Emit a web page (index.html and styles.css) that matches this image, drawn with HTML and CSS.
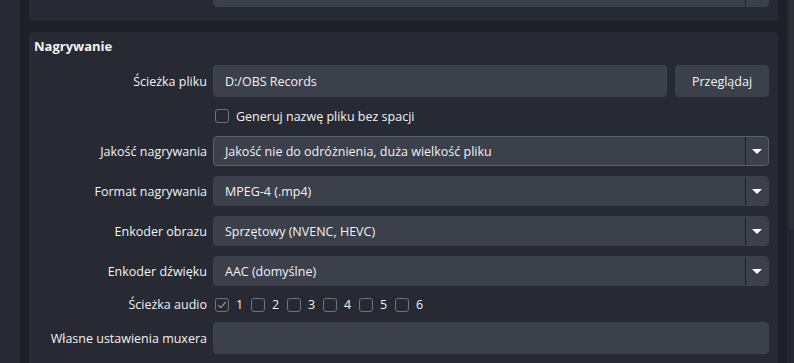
FILE: index.html
```html
<!DOCTYPE html>
<html lang="pl">

<head>
  <meta charset="UTF-8" />
  <meta name="viewport" content="width=device-width, initial-scale=1.0" />
  <title>Ustawienia - Wyjście</title>
  <link rel="stylesheet" href="styles.css">
</head>

<body>
  <div class="window">
    <div class="side"></div>
    <div class="scroll">
      <!-- panel above, scrolled mostly out of view -->
      <div class="group group-prev">
        <div class="form">
          <span class="label"></span>
          <div class="select"><span class="value"></span><span class="arrow"></span></div>
        </div>
      </div>

      <div class="group">
        <h3 class="title">Nagrywanie</h3>
        <div class="form">
          <span class="label">Ścieżka pliku</span>
          <div class="path-row">
            <div class="input">D:/OBS Records</div>
            <button class="btn">Przeglądaj</button>
          </div>

          <span class="label"></span>
          <label class="check-row"><span class="box"></span>Generuj nazwę pliku bez spacji</label>

          <span class="label">Jakość nagrywania</span>
          <div class="select-wrap">
            <div class="select focus"><span class="value">Jakość nie do odróżnienia, duża wielkość pliku</span><span class="arrow"></span></div>
          </div>

          <span class="label">Format nagrywania</span>
          <div class="select-wrap">
            <div class="select"><span class="value">MPEG-4 (.mp4)</span><span class="arrow"></span></div>
          </div>

          <span class="label">Enkoder obrazu</span>
          <div class="select-wrap">
            <div class="select"><span class="value">Sprzętowy (NVENC, HEVC)</span><span class="arrow"></span></div>
          </div>

          <span class="label">Enkoder dźwięku</span>
          <div class="select-wrap">
            <div class="select"><span class="value">AAC (domyślne)</span><span class="arrow"></span></div>
          </div>

          <span class="label">Ścieżka audio</span>
          <div class="tracks">
            <label class="track"><span class="box checked"></span>1</label>
            <label class="track"><span class="box"></span>2</label>
            <label class="track"><span class="box"></span>3</label>
            <label class="track"><span class="box"></span>4</label>
            <label class="track"><span class="box"></span>5</label>
            <label class="track"><span class="box"></span>6</label>
          </div>

          <span class="label">Własne ustawienia muxera</span>
          <div class="input"></div>
        </div>
      </div>
    </div>
    <div class="scrollbar"><div class="handle"></div></div>
  </div>
</body>

</html>
```

FILE: styles.css
```css
html,
body,
h3 {
  margin: 0;
  padding: 0;
}

body {
  background: #272a33;
  color: #f2f2f2;
  font-family: "Open Sans", "Noto Sans", sans-serif;
  font-size: 12.5px;
  overflow: hidden;
}

.window {
  display: flex;
  height: 363px;
}

.side {
  width: 20px;
  background: #272a33;
}

.scroll {
  flex: 1;
  background: #1e2028;
  padding: 0 9px;
  overflow: hidden;
}

.scrollbar {
  width: 7px;
  background: #252730;
  display: flex;
  justify-content: flex-end;
}

.handle {
  width: 5px;
  height: 230px;
  background: #2c2f39;
  border-radius: 0 0 2px 2px;
}

.group {
  background: #272a33;
  border-radius: 4px;
  padding: 5px 9px 14px 5px;
  margin-bottom: 11px;
}

.group-prev {
  margin-top: -23px;
  padding-top: 0;
}

.title {
  font-size: 13px;
  font-weight: bold;
  line-height: 18px;
  margin-bottom: 10px;
}

.form {
  display: grid;
  grid-template-columns: 173px 1fr;
  column-gap: 6px;
  row-gap: 8px;
  align-items: center;
}

.label {
  text-align: right;
  white-space: nowrap;
}

.path-row {
  display: flex;
  gap: 8px;
}

.path-row .input {
  flex: 1;
}

.input {
  height: 32px;
  background: #3c404b;
  border-radius: 4px;
  box-sizing: border-box;
  padding: 0 12px;
  display: flex;
  align-items: center;
}

.btn {
  width: 94px;
  height: 32px;
  border: none;
  border-radius: 4px;
  background: #3c404b;
  color: #f2f2f2;
  font: inherit;
  padding: 0;
}

.check-row {
  height: 22px;
  display: flex;
  align-items: center;
  gap: 7px;
  padding-left: 2px;
}

.box {
  width: 14px;
  height: 14px;
  box-sizing: border-box;
  border: 1px solid #70737d;
  border-radius: 3px;
  position: relative;
}

.box.checked::after {
  content: "";
  position: absolute;
  left: 4px;
  top: 1px;
  width: 3px;
  height: 7px;
  border-right: 1.5px solid #a3a5ad;
  border-bottom: 1.5px solid #a3a5ad;
  transform: rotate(40deg);
}

.select-wrap {
  height: 32px;
  display: flex;
  align-items: center;
}

.select {
  flex: 1;
  height: 30px;
  background: #3c404b;
  border: 1px solid #3c404b;
  border-radius: 4px;
  box-sizing: border-box;
  display: flex;
  align-items: center;
}

.select.focus {
  border-color: #5a5e70;
}

.value {
  flex: 1;
  padding-left: 11px;
}

.arrow {
  width: 23px;
  height: 28px;
  border-left: 1px solid #1e2028;
  box-sizing: border-box;
  position: relative;
}

.arrow::after {
  content: "";
  position: absolute;
  left: 6px;
  top: 12px;
  border-left: 5px solid transparent;
  border-right: 5px solid transparent;
  border-top: 5px solid #ffffff;
}

.tracks {
  height: 19px;
  display: flex;
  align-items: center;
  padding-left: 2px;
}

.track {
  display: flex;
  align-items: center;
  gap: 7px;
  width: 36px;
}
```
